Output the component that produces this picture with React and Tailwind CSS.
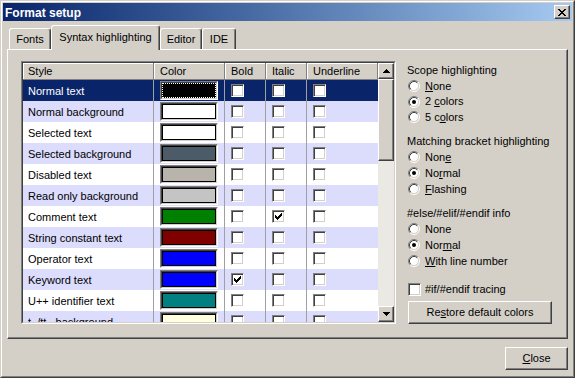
import React from "react";

const raised =
  "border border-t-white border-l-white border-r-[#404040] border-b-[#404040] shadow-[inset_-1px_-1px_0_#808080] bg-[#d4d0c8]";

function Pixels({ rows, color = "#000" }) {
  const w = rows[0].length;
  const h = rows.length;
  const rects = [];
  rows.forEach((r, y) =>
    r.split("").forEach((c, x) => {
      if (c === "X") rects.push(<rect key={x + "-" + y} x={x} y={y} width="1" height="1" fill={color} />);
    })
  );
  return (
    <svg width={w} height={h} viewBox={`0 0 ${w} ${h}`} shapeRendering="crispEdges">
      {rects}
    </svg>
  );
}

const CHECK = ["......X", ".....XX", "X...XXX", "XX.XXX.", "XXXXX..", ".XXX...", "..X...."];
const CLOSE_X = ["XX....XX", ".XX..XX.", "..XXXX..", "...XX...", "..XXXX..", ".XX..XX.", "XX....XX"];
const UP = ["...X...", "..XXX..", ".XXXXX.", "XXXXXXX"];
const DOWN = ["XXXXXXX", ".XXXXX.", "..XXX..", "...X..."];

function CheckBox({ checked }) {
  return (
    <div className="w-[13px] h-[13px] shrink-0 bg-white border border-t-[#808080] border-l-[#808080] border-r-white border-b-white shadow-[inset_1px_1px_0_#404040,inset_-1px_-1px_0_#d4d0c8] flex items-center justify-center">
      {checked && <Pixels rows={CHECK} />}
    </div>
  );
}

function Radio({ checked }) {
  return (
    <svg width="12" height="12" viewBox="0 0 12 12" className="shrink-0">
      <circle cx="6" cy="6" r="4.5" fill="#fff" />
      <path d="M2.11 9.89 A5.5 5.5 0 0 1 9.89 2.11" fill="none" stroke="#808080" strokeWidth="1" />
      <path d="M9.89 2.11 A5.5 5.5 0 0 1 2.11 9.89" fill="none" stroke="#fff" strokeWidth="1" />
      <path d="M2.82 9.18 A4.5 4.5 0 0 1 9.18 2.82" fill="none" stroke="#404040" strokeWidth="1" />
      <path d="M9.18 2.82 A4.5 4.5 0 0 1 2.82 9.18" fill="none" stroke="#d4d0c8" strokeWidth="1" />
      {checked && <circle cx="6" cy="6" r="2" fill="#000" />}
    </svg>
  );
}

function Swatch({ color, focus }) {
  return (
    <div className="w-[58px] h-[19px] border border-t-[#808080] border-l-[#808080] border-r-white border-b-white">
      <div className="w-full h-full border border-t-[#404040] border-l-[#404040] border-r-[#d4d0c8] border-b-[#d4d0c8]">
        <div
          className={
            "w-full h-full border " + color + (focus ? " border-dotted border-white" : " border-black")
          }
        />
      </div>
    </div>
  );
}

const rows = [
  { name: "Normal text", color: "bg-black" },
  { name: "Normal background", color: "bg-white" },
  { name: "Selected text", color: "bg-white" },
  { name: "Selected background", color: "bg-[#4b5b68]" },
  { name: "Disabled text", color: "bg-[#b8b4ac]" },
  { name: "Read only background", color: "bg-[#c4c4c4]" },
  { name: "Comment text", color: "bg-[#008000]", italic: true },
  { name: "String constant text", color: "bg-[#800000]" },
  { name: "Operator text", color: "bg-[#0000ff]" },
  { name: "Keyword text", color: "bg-[#0000ff]", bold: true },
  { name: "U++ identifier text", color: "bg-[#008080]" },
  { name: "t_/tt_ background", color: "bg-[#ffffe0]" },
];

function Grid() {
  const hcell = "h-full flex items-center pt-px border-r border-r-[#808080] shadow-[inset_1px_1px_0_#fff]";
  const sep = "h-full flex items-center border-r border-r-[#a0a0a0]";
  return (
    <div className="w-[375px] h-[263px] shrink-0 border border-t-[#808080] border-l-[#808080] border-r-white border-b-white">
      <div className="w-full h-full border border-t-[#404040] border-l-[#404040] border-r-[#d4d0c8] border-b-[#d4d0c8] flex bg-white">
        <div className="w-[355px] h-full flex flex-col overflow-hidden">
          <div className="h-[17px] shrink-0 flex bg-[#d4d0c8] border-b border-b-[#808080]">
            <div className={hcell + " w-[131px] pl-[5px]"}>Style</div>
            <div className={hcell + " w-[71px] pl-[6px]"}>Color</div>
            <div className={hcell + " w-[41px] pl-[6px]"}>Bold</div>
            <div className={hcell + " w-[41px] pl-[6px]"}>Italic</div>
            <div className={hcell + " w-[71px] pl-[6px]"}>Underline</div>
          </div>
          {rows.map((r, i) => {
            const bg = i === 0 ? "bg-[#0a246a] text-white" : i % 2 === 1 ? "bg-[#dcdcfc] text-black" : "bg-white text-black";
            return (
              <div key={r.name} className={"h-[21px] shrink-0 flex " + bg}>
                <div className={sep + " w-[131px] pl-[5px] pt-px whitespace-nowrap"}>{r.name}</div>
                <div className={"h-full flex items-start pt-[1px] border-r border-r-[#a0a0a0] w-[71px] pl-[6px]"}>
                  <Swatch color={r.color} focus={i === 0} />
                </div>
                <div className={sep + " w-[41px] pl-[6px]"}>
                  <CheckBox checked={r.bold} />
                </div>
                <div className={sep + " w-[41px] pl-[6px]"}>
                  <CheckBox checked={r.italic} />
                </div>
                <div className={"h-full flex items-center w-[71px] pl-[6px]"}>
                  <CheckBox checked={r.underline} />
                </div>
              </div>
            );
          })}
        </div>
        <div className="w-[16px] h-full flex flex-col">
          <div className={raised + " h-[16px] shrink-0 flex items-center justify-center"}>
            <Pixels rows={UP} />
          </div>
          <div className="flex-1 flex flex-col bg-[#ebe9e4]">
            <div className={raised + " h-[82px]"} />
          </div>
          <div className={raised + " h-[16px] shrink-0 flex items-center justify-center"}>
            <Pixels rows={DOWN} />
          </div>
        </div>
      </div>
    </div>
  );
}

function RadioItem({ checked, children, h = "h-[16px]" }) {
  return (
    <div className={h + " flex items-center gap-[5px] pl-[1px] whitespace-nowrap"}>
      <Radio checked={checked} />
      <span>{children}</span>
    </div>
  );
}

function Heading({ children }) {
  return <div className="h-[16px] flex items-center whitespace-nowrap">{children}</div>;
}

function Tab({ label, active, w }) {
  return (
    <div
      className={
        w +
        " flex items-center justify-center bg-[#d4d0c8] border-t border-l border-r border-t-white border-l-white border-r-[#404040] shadow-[inset_-1px_0_0_#808080] rounded-t-[3px] whitespace-nowrap " +
        (active ? "h-[25px] -mb-px pb-[1px]" : "h-[21px]")
      }
    >
      {label}
    </div>
  );
}

export default function App() {
  return (
    <div className="w-[575px] h-[378px] bg-[#d4d0c8] border border-t-[#d4d0c8] border-l-[#d4d0c8] border-r-[#404040] border-b-[#404040] font-['Liberation_Sans',Arial,sans-serif] text-[11px] text-black select-none">
      <div className="w-full h-full border border-t-white border-l-white border-r-[#808080] border-b-[#808080] p-px flex flex-col">
        {/* Title bar */}
        <div className="h-[18px] shrink-0 flex items-center bg-linear-to-r from-[#0a246a] to-[#a6caf0] pl-[2px] pr-[2px]">
          <span className="text-white font-bold text-[12px] leading-[18px] pt-px">Format setup</span>
          <div className="flex-1" />
          <div className="w-[16px] h-[14px] flex items-center justify-center border border-t-white border-l-white border-r-[#404040] border-b-[#404040] shadow-[inset_-1px_-1px_0_#808080] bg-[#d4d0c8]">
            <Pixels rows={CLOSE_X} />
          </div>
        </div>

        {/* Body */}
        <div className="flex-1 flex flex-col px-[4px] pt-[4px]">
          <div className="relative z-10 h-[24px] shrink-0 flex items-end pl-[2px]">
            <Tab label="Fonts" w="w-[42px]" />
            <Tab label="Syntax highlighting" w="w-[109px]" active />
            <Tab label="Editor" w="w-[42px]" />
            <Tab label="IDE" w="w-[34px]" />
          </div>
          <div className="h-[290px] shrink-0 flex pl-[13px] pt-[11px] border border-t-white border-l-white border-r-[#404040] border-b-[#404040] shadow-[inset_-1px_-1px_0_#808080]">
            <Grid />
            <div className="ml-[11px] w-[150px] flex flex-col pt-[1px]">
              <Heading>Scope highlighting</Heading>
              <RadioItem>
                <u>N</u>one
              </RadioItem>
              <RadioItem checked h="h-[15px]">
                2 <u>c</u>olors
              </RadioItem>
              <RadioItem>
                5 c<u>o</u>lors
              </RadioItem>
              <div className="h-[8px]" />
              <Heading>Matching bracket highlighting</Heading>
              <RadioItem>
                Non<u>e</u>
              </RadioItem>
              <RadioItem checked>
                No<u>r</u>mal
              </RadioItem>
              <RadioItem>
                <u>F</u>lashing
              </RadioItem>
              <div className="h-[8px]" />
              <Heading>#else/#elif/#endif info</Heading>
              <RadioItem>None</RadioItem>
              <RadioItem checked>
                Nor<u>m</u>al
              </RadioItem>
              <RadioItem>
                <u>W</u>ith line number
              </RadioItem>
              <div className="h-[12px]" />
              <div className="h-[17px] flex items-center gap-[4px] pl-[1px] whitespace-nowrap">
                <CheckBox />
                <span>#if/#endif tracing</span>
              </div>
              <div className="h-[3px]" />
              <div className={raised + " ml-px w-[144px] h-[23px] flex items-center justify-center whitespace-nowrap"}>
                <span>
                  Re<u>s</u>tore default colors
                </span>
              </div>
            </div>
          </div>
          <div className="flex justify-end pt-[8px]">
            <div className={raised + " w-[63px] h-[23px] flex items-center justify-center"}>
              <span>
                <u>C</u>lose
              </span>
            </div>
          </div>
        </div>
      </div>
    </div>
  );
}
